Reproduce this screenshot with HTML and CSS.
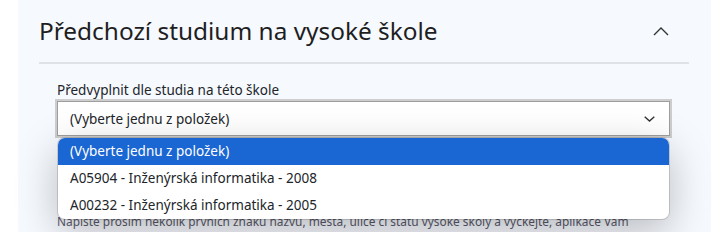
FILE: index.html
```html
<!DOCTYPE html>
<html lang="cs">
<head>
<meta charset="utf-8">
<link rel="stylesheet" href="styles.css">
</head>
<body>
<section class="panel">
  <header class="panel-head">
    <h2 class="panel-title">Předchozí studium na vysoké škole</h2>
    <svg class="collapse-icon" width="16" height="9" viewBox="0 0 16 9"><path d="M1 8 L8 1 L15 8" fill="none" stroke="#333" stroke-width="1.4"/></svg>
  </header>
  <div class="panel-body">
    <label class="field-label">Předvyplnit dle studia na této škole</label>
    <div class="select-wrap">
      <div class="select">
        <span>(Vyberte jednu z položek)</span>
        <svg class="select-arrow" width="11" height="6" viewBox="0 0 11 6"><path d="M0.7 0.7 L5.5 5 L10.3 0.7" fill="none" stroke="#333" stroke-width="1.4"/></svg>
      </div>
      <ul class="dropdown">
        <li class="option selected">(Vyberte jednu z položek)</li>
        <li class="option">A05904 - Inženýrská informatika - 2008</li>
        <li class="option">A00232 - Inženýrská informatika - 2005</li>
      </ul>
    </div>
    <p class="hint">Napište prosím několik prvních znaků názvu, města, ulice či státu vysoké školy a vyčkejte, aplikace Vám</p>
  </div>
</section>
</body>
</html>
```
FILE: styles.css
```css
html, body {
  margin: 0;
  padding: 0;
  background: #ffffff;
  font-family: "Noto Sans", "Open Sans", sans-serif;
  color: #212529;
  overflow: hidden;
}
.panel {
  margin-left: 18px;
  width: 693px;
  height: 232px;
  background: #f6f9fe;
  padding: 0 22px 0 21px;
  box-sizing: border-box;
}
.panel-head {
  display: flex;
  align-items: center;
  justify-content: space-between;
  height: 62px;
  border-bottom: 2px solid #dfe2e7;
  padding-right: 20px;
}
.panel-title {
  margin: 0;
  font-size: 24.4px;
  font-weight: 400;
  line-height: 62px;
  color: #1e1e1e;
}
.collapse-icon {
  display: block;
}
.panel-body {
  padding: 17px 0 0 18px;
}
.field-label {
  display: block;
  font-size: 13.5px;
  line-height: 18px;
  color: #212529;
}
.select-wrap {
  position: relative;
  width: 613px;
}
.select {
  height: 35px;
  background: #ffffff;
  border: 1px solid #9e9e9e;
  box-shadow: 0 0 0 2px #cdcdcd;
  display: flex;
  align-items: center;
  justify-content: space-between;
  padding: 0 14px 0 12px;
  font-size: 13.5px;
  color: #212529;
  box-sizing: border-box;
  margin-top: 2px;
}
.select-arrow {
  display: block;
}
.dropdown {
  position: absolute;
  left: 1px;
  right: 1px;
  top: 37px;
  margin: 0;
  padding: 0;
  list-style: none;
  background: #ffffff;
  border-radius: 7px;
  overflow: hidden;
  box-shadow: 0 0 0 1px rgba(0,0,0,0.14), 0 12px 40px rgba(0,0,0,0.26);
  z-index: 2;
}
.option {
  height: 27px;
  line-height: 27px;
  padding-left: 12px;
  font-size: 13.5px;
  color: #212529;
}
.option.selected {
  background: #1a66d2;
  color: #ffffff;
}
.hint {
  margin: 77px 0 0 0;
  font-size: 11.9px;
  line-height: 16px;
  color: #5c5a6c;
}
```
